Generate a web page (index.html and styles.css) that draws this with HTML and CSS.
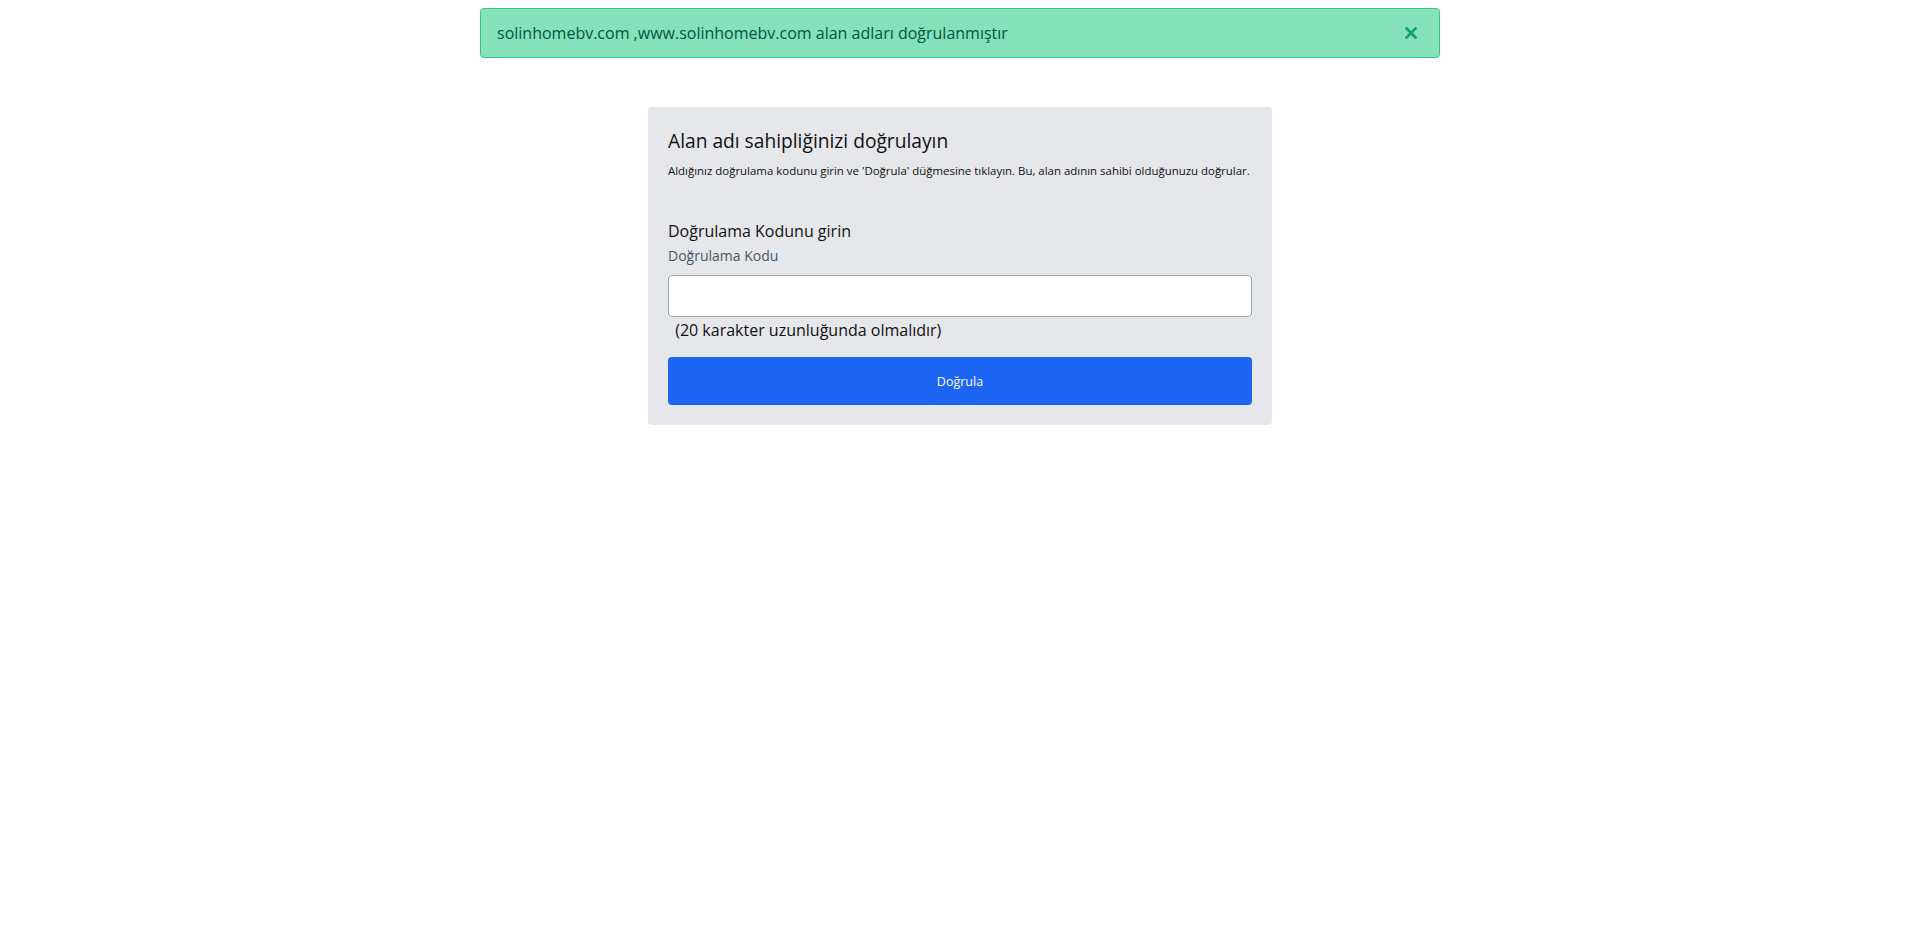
FILE: index.html
```html
<!DOCTYPE html>
<html lang="tr">
<head>
<meta charset="utf-8">
<title>Alan adı doğrulama</title>
<link rel="stylesheet" href="styles.css">
</head>
<body>
  <div class="alert" role="alert">
    <span class="alert-text">solinhomebv.com ,www.solinhomebv.com alan adları doğrulanmıştır</span>
    <button class="alert-close" type="button" aria-label="Kapat">
      <svg viewBox="0 0 12 12" width="12" height="12" aria-hidden="true">
        <path d="M1.5 1.5 L10.5 10.5 M10.5 1.5 L1.5 10.5" stroke="currentColor" stroke-width="2.6" stroke-linecap="square" fill="none"/>
      </svg>
    </button>
  </div>

  <main class="card">
    <h1 class="card-title">Alan adı sahipliğinizi doğrulayın</h1>
    <p class="card-desc">Aldığınız doğrulama kodunu girin ve 'Doğrula' düğmesine tıklayın. Bu, alan adının sahibi olduğunuzu doğrular.</p>

    <form class="verify-form">
      <h2 class="form-heading">Doğrulama Kodunu girin</h2>
      <label class="form-label" for="code">Doğrulama Kodu</label>
      <input class="form-input" id="code" type="text">
      <p class="form-hint">&nbsp;(20 karakter uzunluğunda olmalıdır)</p>
      <button class="form-submit" type="submit">Doğrula</button>
    </form>
  </main>
</body>
</html>
```

FILE: styles.css
```css
* {
  box-sizing: border-box;
}

body {
  margin: 0;
  background: #ffffff;
  font-family: "Open Sans", "Liberation Sans", sans-serif;
  color: #111111;
}

/* success banner */
.alert {
  width: 960px;
  margin: 8px auto 0;
  display: flex;
  align-items: center;
  justify-content: space-between;
  padding: 12px 22px 12px 16px;
  background: #84e1bc;
  border: 1px solid #31c48d;
  border-radius: 4px;
  color: #03543f;
  font-size: 16px;
  line-height: 24px;
}

.alert-close {
  display: flex;
  align-items: center;
  justify-content: center;
  padding: 0;
  border: 0;
  background: none;
  color: #0e9f6e;
  cursor: pointer;
}

/* verification card */
.card {
  width: 624px;
  margin: 49px auto 0;
  padding: 20px;
  background: #e5e7eb;
  border-radius: 4px;
}

.card-title {
  margin: 0;
  font-size: 19.2px;
  line-height: 28px;
  font-weight: 400;
  color: #111111;
}

.card-desc {
  margin: 8px 0 0;
  font-size: 11.45px;
  line-height: 16px;
  white-space: nowrap;
  color: #111111;
}

.verify-form {
  display: flex;
  flex-direction: column;
  margin-top: 40px;
}

.form-heading {
  margin: 0;
  font-size: 16px;
  line-height: 24px;
  font-weight: 400;
  color: #111111;
}

.form-label {
  margin-top: 3px;
  font-size: 14px;
  line-height: 20px;
  color: #4b5563;
}

.form-input {
  margin-top: 9px;
  height: 42px;
  width: 100%;
  padding: 8px 12px;
  border: 1px solid #9ca3af;
  border-radius: 4px;
  background: #ffffff;
  font-family: inherit;
  font-size: 14px;
}

.form-hint {
  margin: 1px 0 0;
  padding-left: 3px;
  font-size: 16px;
  line-height: 24px;
  color: #111111;
}

.form-submit {
  margin-top: 15px;
  height: 48px;
  width: 100%;
  border: 0;
  border-radius: 4px;
  background: #1c64f2;
  color: #ffffff;
  font-family: inherit;
  font-size: 12.5px;
  cursor: pointer;
}
```
